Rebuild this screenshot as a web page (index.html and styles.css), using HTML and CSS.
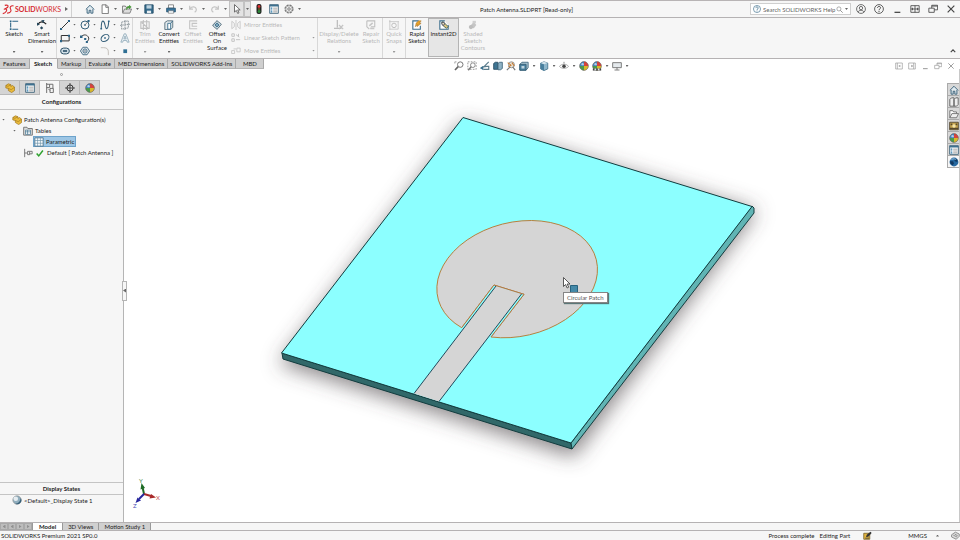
FILE: index.html
```html
<!DOCTYPE html>
<html lang="en">
<head>
    <meta charset="UTF-8">
    <meta name="viewport" content="width=device-width, initial-scale=1.0">
    <title>Patch Antenna.SLDPRT [Read-only]</title>
    <link rel="stylesheet" href="styles.css">
</head>
<body>
    <!-- Icon set, all on a 12x12 grid -->
    <svg class="icon-set" aria-hidden="true">
        <symbol id="home" viewBox="0 0 12 12"><path d="M1 6.500 6 1.500l5 5M2.500 6v5h2.500V7.500h2V11h2.500V6" fill="#dfeaf0" stroke="#28536d"/></symbol>
        <symbol id="new" viewBox="0 0 12 12"><path d="M2.500 1h5l2.500 2.500V11.500H2.500zM7 1v3h3" fill="#fff" stroke="#666"/></symbol>
        <symbol id="open" viewBox="0 0 12 12"><path d="M.5 10.500v-8h3.500l1 1.500h4v2" fill="#eee" stroke="#666"/><path d="M.8 11 3 6h8.500L9.500 11z" fill="#ddd" stroke="#777"/><path d="M5 7c0-3 1-4.500 3.500-4.500V1l3 2.500-3 2.500V4.500C7 4.500 6.500 5.500 6 7z" fill="#4a9a3c"/></symbol>
        <symbol id="save" viewBox="0 0 12 12"><path d="M1 1h10v10H1z" fill="#356a8b" stroke="#204a65"/><path d="M3 1.500h6v4H3z" fill="#bcd2df"/><path d="M3.500 8h5v3h-5z" fill="#e8eef2"/></symbol>
        <symbol id="print" viewBox="0 0 12 12"><path d="M3 1h6v4H3z" fill="#fff" stroke="#777"/><path d="M.8 5h10.400v4.500H.8z" fill="#36749c" stroke="#24506d"/><path d="M3 8h6v3.200H3z" fill="#eef3f6" stroke="#666" stroke-width=".6"/></symbol>
        <symbol id="undo" viewBox="0 0 12 12"><path d="M2 2v4h4M2.500 5.500C5 2.500 9.500 3 10 6.500c.2 1.500-.5 2.500-2 3.500" fill="none" stroke="#c5c5c5" stroke-width="1.500"/></symbol>
        <symbol id="redo" viewBox="0 0 12 12"><path d="M10 2v4H6M9.500 5.500C7 2.500 2.500 3 2 6.500c-.2 1.500.5 2.500 2 3.500" fill="none" stroke="#c5c5c5" stroke-width="1.500"/></symbol>
        <symbol id="pointer" viewBox="0 0 12 12"><path d="M3 .7v9l2.200-2 1.600 3.600 1.600-.7-1.600-3.500h3z" fill="#fff" stroke="#444" stroke-width=".9"/></symbol>
        <symbol id="traffic" viewBox="0 0 12 12"><rect x="3" y="0" width="6" height="12" rx="2.500" fill="#222"/><circle cx="6" cy="3" r="1.700" fill="#d33"/><circle cx="6" cy="6" r="1.300" fill="#6b5a22"/><circle cx="6" cy="9" r="1.700" fill="#2e8a3a"/></symbol>
        <symbol id="list" viewBox="0 0 12 12"><path d="M.8.800h10.400v10.400H.8z" fill="#fff" stroke="#2f5870"/><path d="M.8 1h10.400v2H.8z" fill="#3d708f"/><path d="M2 5h2M2 7.200h2M2 9.400h2" stroke="#2b78a8" stroke-width="1.400"/><path d="M5 5h5M5 7.200h5M5 9.400h5" stroke="#777" stroke-width=".8"/></symbol>
        <symbol id="gear" viewBox="0 0 12 12"><circle cx="6" cy="6" r="4.700" fill="none" stroke="#777" stroke-width="1.500" stroke-dasharray="2.600 1.100"/><circle cx="6" cy="6" r="3.900" fill="#eee" stroke="#777" stroke-width=".7"/><circle cx="6" cy="6" r="1.500" fill="#fff" stroke="#666"/></symbol>
        <symbol id="help" viewBox="0 0 12 12"><circle cx="6" cy="6" r="5.300" fill="none" stroke="currentColor"/><path d="M4.200 4.600c.1-2.300 3.700-2.200 3.600 0C7.800 6 6 5.900 6 7.400M6 8.300v1.200" fill="none" stroke="currentColor" stroke-width="1.200"/></symbol>
        <symbol id="user" viewBox="0 0 12 12"><circle cx="6" cy="6" r="5.300" fill="none" stroke="#555"/><circle cx="6" cy="4.900" r="2" fill="none" stroke="#555"/><path d="M2.500 9.800c1-3 6-3 7 0" fill="none" stroke="#555"/></symbol>
        <symbol id="search" viewBox="0 0 12 12"><circle cx="5" cy="5" r="3.500" fill="#fff" stroke="#777"/><path d="m7.500 7.500 4 4" stroke="#777" stroke-width="1.300"/></symbol>
        <symbol id="minimize" viewBox="0 0 12 12"><path d="M3 10h7" stroke="currentColor" stroke-width="1.500"/></symbol>
        <symbol id="span" viewBox="0 0 12 12"><path d="M1 2h10v8H1zM6 2v8M1 6h10M3 4.500v3M9 4.500v3" fill="none" stroke="currentColor"/></symbol>
        <symbol id="restore" viewBox="0 0 12 12"><path d="M1 5h6.500v5H1zM4.500 5V1.500H11.500V7H7.500M4.500 2.500h7" fill="none" stroke="currentColor"/></symbol>
        <symbol id="close" viewBox="0 0 12 12"><path d="m2 2 8 8m0-8-8 8" stroke="currentColor" stroke-width="1.400"/></symbol>
        <symbol id="pane-left" viewBox="0 0 12 12"><path d="M1 1.500h10v9H1zM3.500 1.500v9" fill="none" stroke="currentColor"/><path d="M8 4v4L5 6z" fill="currentColor"/></symbol>
        <symbol id="pane-right" viewBox="0 0 12 12"><path d="M1 1.500h10v9H1zM8.500 1.500v9" fill="none" stroke="currentColor"/><path d="M5 4v4l3-2z" fill="currentColor"/></symbol>

        <symbol id="sketch" viewBox="0 0 12 12"><path d="M11 1.500H4M2 3v6M4 11h7" fill="none" stroke="#2d6486" stroke-width="1.300"/><path d="M1 .5h2v2H1zM1 10h2v2H1z" fill="#2d6486"/></symbol>
        <symbol id="smart-dim" viewBox="0 0 12 12"><path d="M1 5.500C3.500 1 8 1.500 11 5" fill="none" stroke="#222" stroke-width="1.500"/><path d="M0 3v4l3.500-1.500zM5 .3 9 0 7.500 4zM3.500 9.500l2-2 2 2-2 2z" fill="#27485c"/></symbol>
        <symbol id="line" viewBox="0 0 12 12"><path d="M1.500 10.500 10.500 1.500" stroke="#333" stroke-width="1.200"/><path d="M0 9.500h2.500V12H0zM9.500 0H12v2.500H9.500z" fill="#2d6486"/></symbol>
        <symbol id="rect" viewBox="0 0 12 12"><path d="M1.500 3h9.500v6.500H1.500z" fill="none" stroke="#333" stroke-width="1.200"/><path d="M0 8.500h2.500V11H0zM9.500 2H12v2.500H9.500z" fill="#2d6486"/></symbol>
        <symbol id="slot" viewBox="0 0 12 12"><rect x=".8" y="2.500" width="10.400" height="7" rx="3.500" fill="#d4e1e9" stroke="#2d5168" stroke-width="1.200"/><path d="M3.500 6h5" stroke="#2d5168" stroke-width="2"/></symbol>
        <symbol id="circle" viewBox="0 0 12 12"><circle cx="6" cy="6" r="4.800" fill="none" stroke="#36607a" stroke-width="1.200"/><path d="M5 5h2v2H5zM9 0h2.500v2.500H9z" fill="#2d6486"/><path d="m6 6 3.500-4" stroke="#777"/></symbol>
        <symbol id="arc" viewBox="0 0 12 12"><path d="M1 5C4 1 9 1.500 10.500 6c.2 2-.8 3.500-2.500 4.500" fill="none" stroke="#444" stroke-width="1.200"/><path d="M0 3h3v3H0zM5 6h2.500v2.500H5zM7 9.500h2.500V12H7z" fill="#2d6486"/></symbol>
        <symbol id="polygon" viewBox="0 0 12 12"><path d="M3.500 1.500h5L11.500 6l-3 4.500h-5L.5 6z" fill="#e0e8ed" stroke="#36607a"/><circle cx="6" cy="6" r="2.500" fill="none" stroke="#36607a"/><path d="M5.300 5.300h1.400v1.400H5.300z" fill="#234"/></symbol>
        <symbol id="spline" viewBox="0 0 12 12"><path d="M1.500 10.500C1.500-3 5 1 6 6s3.500 8 4.500-4.500" fill="none" stroke="#36607a" stroke-width="1.300"/><path d="M.5 9.500h2v2h-2zM9.500.5h2v2h-2z" fill="#2d6486"/></symbol>
        <symbol id="ellipse" viewBox="0 0 12 12"><ellipse cx="6" cy="6" rx="5.200" ry="3.700" transform="rotate(-35 6 6)" fill="none" stroke="#36607a" stroke-width="1.200"/><path d="M5 5h2v2H5z" fill="#2d6486"/></symbol>
        <symbol id="fillet" viewBox="0 0 12 12"><path d="M1 2h3.500c4 0 5.500 2 5.500 5v4" fill="none" stroke="#c4c0bb" stroke-width="1.200"/></symbol>
        <symbol id="plane" viewBox="0 0 12 12"><path d="M2 2.500 10 1v8.500L2 11zM6 0v12M0 6.500 12 5" fill="none" stroke="#808a90" stroke-dasharray="2 .7"/></symbol>
        <symbol id="text" viewBox="0 0 12 12"><path d="M1 11 5 1h2l4 10H8.500L8 9H4l-.6 2zM4.700 7h2.600L6 3.500z" fill="#e8eff3" stroke="#7f9dae" stroke-width=".8"/></symbol>
        <symbol id="point" viewBox="0 0 12 12"><path d="M4 4h4.500v4.500H4z" fill="#2f6f94"/></symbol>
        <symbol id="trim" viewBox="0 0 12 12"><path d="M1 2h10v8H1zM4 0v12M8 0v12M2 3l8 7" fill="none" stroke="#c0c0c0" stroke-width="1.300"/></symbol>
        <symbol id="convert" viewBox="0 0 12 12"><path d="m1 3 3-2h6.500v8L8 11.500H1z" fill="#e2e8eb" stroke="#486471"/><path d="M4.500 4H8v7H4.500zM8 4l2.500-3" fill="#fff" stroke="#2d6486"/></symbol>
        <symbol id="offset" viewBox="0 0 12 12"><path d="M11 1H2v9.500h9M11 4H5v3.500h6" fill="none" stroke="#c4c4c4" stroke-width="1.300"/></symbol>
        <symbol id="surface" viewBox="0 0 12 12"><path d="M.8 6C3 5 4 2 6 .8 8 3 10 3 11.200 5.500 9 7 8 10 6 11.200 4 9 2 9 .8 6z" fill="#cddbe2" stroke="#415e6e"/><path d="M3.500 6 6 3.500 8.500 6 6 8.500z" fill="#7da4b8" stroke="#2d6486"/></symbol>
        <symbol id="mirror" viewBox="0 0 12 12"><path d="M6 0v12M1 1.500 4 4v4l-3 2.500zM11 1.500 8 4v4l3 2.500z" fill="none" stroke="#c4c4c4"/></symbol>
        <symbol id="pattern" viewBox="0 0 12 12"><path d="M1 1h3v3H1zM1 7h3v3H1zM6 2l4 3M6 8h5M9 1v3" fill="none" stroke="#c4c4c4" stroke-width="1.200"/></symbol>
        <symbol id="move" viewBox="0 0 12 12"><path d="M.8 5.500h3.500V9H.8zM7 2.500h4V7H7zM3 3.500h3" fill="none" stroke="#c4c4c4"/></symbol>
        <symbol id="relations" viewBox="0 0 12 12"><path d="M4 0v9M0 10h9" stroke="#bdbdbd" stroke-width="1.500"/><path d="m6 6 5 5m0-5-5 5" stroke="#c4c4c4" stroke-width="1.500"/></symbol>
        <symbol id="repair" viewBox="0 0 12 12"><path d="M1 1h9.500v7H6M1 1v7l3 3" fill="none" stroke="#c0c0c0" stroke-width="1.300"/><path d="M4 7 8 3.500M5 10h5" stroke="#c8c8c8" stroke-width="2"/></symbol>
        <symbol id="snaps" viewBox="0 0 12 12"><path d="M1 0v12M0 2h12M11 2v9H1" fill="none" stroke="#c4c4c4"/><circle cx="6" cy="6.500" r="2.700" fill="none" stroke="#c0c0c0" stroke-width="1.200"/></symbol>
        <symbol id="rapid" viewBox="0 0 12 12"><path d="M8 1H1v10h9V7" fill="#fff" stroke="#3b6e8c" stroke-width="1.300"/><path d="m4 8 1-4.500L8 1h3L9 4h2L6 8l1-2.500z" fill="#e7a32b" stroke="#925d17" stroke-width=".5"/></symbol>
        <symbol id="instant" viewBox="0 0 12 12"><path d="M7 1H1v10h10V6" fill="#fff" stroke="#3b6e8c" stroke-width="1.300"/><path d="m3 3 2-1 6 6-2 2-4-3z" fill="#d9c47c" stroke="#3b5848"/><circle cx="5" cy="4.500" r="1.700" fill="#e7e1b4" stroke="#446"/></symbol>
        <symbol id="shaded" viewBox="0 0 12 12"><path d="M1 9 7 2l3 4-3 4z" fill="#c5c5c5"/><circle cx="3.500" cy="8.500" r="2.500" fill="#bdbdbd"/><path d="M5.500 1h4v3h-4z" fill="#cfcfcf"/></symbol>

        <symbol id="zoom-fit" viewBox="0 0 12 12"><circle cx="7.500" cy="4.300" r="3.300" fill="#fff" stroke="#777" stroke-width="1.200"/><path d="M5 6.800 1.200 10.800" stroke="#666" stroke-width="2"/><path d="M1 1v2M1 1h2" stroke="#999" fill="none"/></symbol>
        <symbol id="zoom-area" viewBox="0 0 12 12"><path d="M1 1h10v9H1z" fill="none" stroke="#888" stroke-dasharray="2 1.500"/><circle cx="7" cy="5" r="2.800" fill="#fff" stroke="#777"/><path d="m5 7-3.500 4" stroke="#777" stroke-width="1.700"/></symbol>
        <symbol id="prev-view" viewBox="0 0 12 12"><path d="M10.500 1 4.500 7M1 9c2-3 5-2.500 9.500-2.500v3.500H4" fill="none" stroke="#5b7c8c" stroke-width="1.400"/><path d="M0 8.500 4 6v5z" fill="#3c728f"/></symbol>
        <symbol id="section" viewBox="0 0 12 12"><path d="m.8 3 2-1.500h3V10H.8z" fill="#3d7593" stroke="#274b60"/><path d="M6 3 8 1.500h3.200V9L9 10.500H6z" fill="#8eb2c5" stroke="#3c6379"/></symbol>
        <symbol id="views" viewBox="0 0 12 12"><circle cx="6.500" cy="4.500" r="3.600" fill="#e7e4da" stroke="#888"/><path d="m1 11 4-4M8 7l3 4" stroke="#777" stroke-width="1.400"/><path d="m2 2 4 3-3 2M7 2l3 4" fill="none" stroke="#c87b32" stroke-width="1.300"/></symbol>
        <symbol id="orient" viewBox="0 0 12 12"><path d="m1 4 2.500-2.500H11V8l-2.500 3H1z" fill="#a7c3d1" stroke="#3c6379"/><path d="M1 4h7.500v7H1z" fill="#4c83a2" stroke="#2f5870"/><path d="M3 6h3.500v3H3z" fill="#bfd3de"/></symbol>
        <symbol id="cube" viewBox="0 0 12 12"><path d="M2 2.500 6 1l4.500 1.500v7L6 11.500 2 9.500z" fill="#8fb7cc" stroke="#41718b"/><path d="M2 2.500 6 4v7.500L2 9.500z" fill="#487f9e"/><path d="m2 2.500 4 1.300 4.500-1.300L6 1z" fill="#d4e4ec"/></symbol>
        <symbol id="eye" viewBox="0 0 12 12"><path d="M.5 6.500C3 3 9 3 11.500 6.500 9 9.500 3 9.500.5 6.500z" fill="#fff" stroke="#999"/><circle cx="6" cy="6.300" r="2.100" fill="#444"/><path d="M6 1v2" stroke="#777"/></symbol>
        <symbol id="ball" viewBox="0 0 12 12"><path d="M6 6V.7A5.300 5.300 0 0 0 .7 6z" fill="#4386c4"/><path d="M6 6h5.300A5.300 5.300 0 0 0 6 .7z" fill="#d7433c"/><path d="M6 6v5.300A5.300 5.300 0 0 0 11.300 6z" fill="#d7b82b"/><path d="M6 6H.7A5.300 5.300 0 0 0 6 11.300z" fill="#4b9a4c"/><circle cx="6" cy="6" r="5.300" fill="none" stroke="#665d58" stroke-width=".7"/><circle cx="4.300" cy="3.800" r="1.400" fill="#fff" fill-opacity=".6"/></symbol>
        <symbol id="scene" viewBox="0 0 12 12"><use href="#ball" width="12" height="12"/><path d="M1 9h10v2.500H1z" fill="#444"/><path d="M3 9h2v2.500H3zM7 9h2v2.500H7z" fill="#ddd"/></symbol>
        <symbol id="monitor" viewBox="0 0 12 12"><path d="M.8 2h10.400v6H.8z" fill="#e5eaed" stroke="#666"/><path d="M6 8v2.500M3 10.800h6" stroke="#666"/></symbol>

        <symbol id="part" viewBox="0 0 12 12"><path d="m1 3 3-2 3 1v2l2-1 2.500 2v4L8 11.500 4 9V6.500L1 6z" fill="#eabb3c" stroke="#9b7014" stroke-width=".8"/><path d="m1 3 2.500 1L7 2M4 6.500 7.500 8l4-3" fill="none" stroke="#9b7014" stroke-width=".7"/></symbol>
        <symbol id="config" viewBox="0 0 12 12"><path d="M2 0v12M2 1.500h3.500v4H2M5.500 1.500h4v5M6 6.500h4v5H6zM4 7l2 2" fill="none" stroke="#666" stroke-width="1.100"/></symbol>
        <symbol id="config-row" viewBox="0 0 12 12"><path d="M2 1v10M2 6h3M5.500 4h2.500v4H5.500zM8 4h3v3H8" fill="none" stroke="#666"/></symbol>
        <symbol id="target" viewBox="0 0 12 12"><circle cx="6" cy="6" r="3.700" fill="#ddd" stroke="#333" stroke-width="1.200"/><path d="M6 0v12M0 6h12" stroke="#333"/></symbol>
        <symbol id="tables" viewBox="0 0 12 12"><path d="M.8 1.500h4l1 1.500h5.400v8H.8z" fill="#dedede" stroke="#666"/><path d="M3 5h6v5H3zM3 7h6M5.500 5v5" fill="#fff" stroke="#3b6e8c" stroke-width=".8"/></symbol>
        <symbol id="grid" viewBox="0 0 12 12"><path d="M1 1h10v10H1z" fill="#f6fafc" stroke="#456f88"/><path d="M1 4.200h10M1 7.500h10M4.300 1v10M7.700 1v10" stroke="#6d93a9" stroke-width=".8"/></symbol>
        <symbol id="check" viewBox="0 0 12 12"><path d="m2 6.500 2.500 3 5-6.500" fill="none" stroke="#2ea22e" stroke-width="1.800"/></symbol>
        <symbol id="display" viewBox="0 0 12 12"><circle cx="6" cy="6" r="5" fill="#8fadbd" stroke="#888" stroke-width=".7"/><circle cx="4.500" cy="4.500" r="2.800" fill="#e6edf1"/><path d="M10.500 3.500A5 5 0 0 1 4 10.600C8 10 10 7.500 10.500 3.500z" fill="#355f78"/></symbol>

        <symbol id="library" viewBox="0 0 12 12"><path d="m1 3 2-2h3v10H1zM6 3l2-2h3v8l-2 2H6z" fill="#eee" stroke="#555"/></symbol>
        <symbol id="folder" viewBox="0 0 12 12"><path d="M1 10.500V2h3.500l1 1.500H9v2" fill="#fff" stroke="#666"/><path d="m1 10.500 2.500-5h8l-2.500 5z" fill="#eee" stroke="#666"/></symbol>
        <symbol id="palette" viewBox="0 0 12 12"><path d="M.8 1.500h10.400v9H.8z" fill="#c6a650" stroke="#493f2b"/><path d="M1 8h10v2H1zM2 3h2v2H2zM8 3h2v2H8z" fill="#57492c"/><circle cx="6" cy="6" r="2" fill="#f5e6aa"/></symbol>
        <symbol id="globe" viewBox="0 0 12 12"><circle cx="6" cy="6" r="5.300" fill="#2568a0"/><path d="M1 5h4l1 3-2 2-2-2zM6 2l4 1v3L7 5z" fill="#123a62"/><path d="M3 3c2-1 3-1 5 0" stroke="#b8dcf2" fill="none"/></symbol>
        <symbol id="edit" viewBox="0 0 12 12"><path d="M1 3h8v8H1z" fill="#e4b740" stroke="#6b5821"/><path d="m4 8 1-3 5-4 1.500 1.500L7 7.500z" fill="#333"/><path d="M3 9.500h5" stroke="#333"/></symbol>
        <symbol id="tags" viewBox="0 0 12 12"><path d="m.8 5 5-3.500L11 4v3l-4 4L.8 8z" fill="#ddd" stroke="#777"/><path d="M3 5.500 8 8M5 4l4 2.500" stroke="#777"/></symbol>
    </svg>

    <header class="title-bar">
        <div class="brand">
            <svg class="brand-mark" viewBox="0 0 13 12" aria-hidden="true"><path d="M3 1.500C5.500.8 7 1.500 6.500 3 6 4.500 3.500 4.500 2 6M3.500 5.500C7 5.500 4 10 .8 10.500M12.500 2C9.500 1.500 8 3.500 9.300 5.500s0 4.500-3.800 4.500" fill="none" stroke="#d8262c" stroke-width="1.200"/></svg>
            <span class="brand-name"><b>SOLID</b>WORKS</span>
            <i class="caret caret-right"></i>
        </div>
        <nav class="quick-access" aria-label="Quick access">
            <button class="tool" aria-label="Home"><svg><use href="#home"/></svg></button>
            <button class="tool" aria-label="New"><svg><use href="#new"/></svg></button><button class="drop" aria-label="New options"><i class="caret"></i></button>
            <button class="tool" aria-label="Open"><svg><use href="#open"/></svg></button><button class="drop" aria-label="Open options"><i class="caret"></i></button>
            <button class="tool" aria-label="Save"><svg><use href="#save"/></svg></button><button class="drop" aria-label="Save options"><i class="caret"></i></button>
            <button class="tool" aria-label="Print"><svg><use href="#print"/></svg></button><button class="drop" aria-label="Print options"><i class="caret"></i></button>
            <button class="tool" aria-label="Undo"><svg><use href="#undo"/></svg></button><button class="drop" aria-label="Undo options"><i class="caret"></i></button>
            <button class="tool" aria-label="Redo"><svg><use href="#redo"/></svg></button><button class="drop" aria-label="Redo options"><i class="caret"></i></button>
            <button class="tool pressed" aria-label="Select"><svg><use href="#pointer"/></svg></button><button class="drop pressed" aria-label="Select options"><i class="caret"></i></button>
            <button class="tool" aria-label="Rebuild"><svg><use href="#traffic"/></svg></button>
            <button class="tool" aria-label="File properties"><svg><use href="#list"/></svg></button>
            <button class="tool" aria-label="Options"><svg><use href="#gear"/></svg></button><button class="drop" aria-label="More options"><i class="caret"></i></button>
        </nav>
        <h1 class="doc-title">Patch Antenna.SLDPRT [Read-only]</h1>
        <form class="search-box">
            <svg class="search-help"><use href="#help"/></svg>
            <input type="text" class="search-input" placeholder="Search SOLIDWORKS Help" aria-label="Search SOLIDWORKS Help">
            <button type="button" class="search-btn" aria-label="Search"><svg><use href="#search"/></svg></button>
            <button type="button" class="drop" aria-label="Search options"><i class="caret"></i></button>
        </form>
        <div class="window-controls">
            <button aria-label="Login"><svg><use href="#user"/></svg></button>
            <button aria-label="Help"><svg><use href="#help"/></svg></button>
            <button aria-label="Minimize"><svg><use href="#minimize"/></svg></button>
            <button aria-label="Span displays"><svg><use href="#span"/></svg></button>
            <button aria-label="Restore"><svg><use href="#restore"/></svg></button>
            <button aria-label="Close"><svg><use href="#close"/></svg></button>
        </div>
    </header>

    <section class="ribbon" aria-label="Sketch commands">
        <div class="group">
            <button class="command"><svg><use href="#sketch"/></svg><span>Sketch</span><i class="caret"></i></button>
            <button class="command"><svg><use href="#smart-dim"/></svg><span>Smart Dimension</span><i class="caret"></i></button>
        </div>
        <div class="group entities">
            <button aria-label="Line"><svg><use href="#line"/></svg><i class="caret"></i></button>
            <button aria-label="Circle"><svg><use href="#circle"/></svg><i class="caret"></i></button>
            <button aria-label="Spline"><svg><use href="#spline"/></svg><i class="caret"></i></button>
            <button aria-label="Plane"><svg><use href="#plane"/></svg></button>
            <button aria-label="Rectangle"><svg><use href="#rect"/></svg><i class="caret"></i></button>
            <button aria-label="Arc"><svg><use href="#arc"/></svg><i class="caret"></i></button>
            <button aria-label="Ellipse"><svg><use href="#ellipse"/></svg><i class="caret"></i></button>
            <button aria-label="Text"><svg><use href="#text"/></svg></button>
            <button aria-label="Slot"><svg><use href="#slot"/></svg><i class="caret"></i></button>
            <button aria-label="Polygon"><svg><use href="#polygon"/></svg></button>
            <button aria-label="Fillet"><svg><use href="#fillet"/></svg><i class="caret"></i></button>
            <button aria-label="Point"><svg><use href="#point"/></svg></button>
        </div>
        <div class="group">
            <button class="command narrow" disabled><svg><use href="#trim"/></svg><span>Trim Entities</span><i class="caret"></i></button>
            <button class="command narrow"><svg><use href="#convert"/></svg><span>Convert Entities</span><i class="caret"></i></button>
            <button class="command narrow" disabled><svg><use href="#offset"/></svg><span>Offset Entities</span></button>
            <button class="command narrow"><svg><use href="#surface"/></svg><span>Offset<br>On<br>Surface</span></button>
            <div class="stack">
                <button disabled><svg><use href="#mirror"/></svg><span>Mirror Entities</span></button>
                <button disabled><svg><use href="#pattern"/></svg><span>Linear Sketch Pattern</span><i class="caret"></i></button>
                <button disabled><svg><use href="#move"/></svg><span>Move Entities</span><i class="caret"></i></button>
            </div>
        </div>
        <div class="group">
            <button class="command wide" disabled><svg><use href="#relations"/></svg><span>Display/Delete Relations</span><i class="caret"></i></button>
            <button class="command small" disabled><svg><use href="#repair"/></svg><span>Repair Sketch</span></button>
        </div>
        <div class="group">
            <button class="command small" disabled><svg><use href="#snaps"/></svg><span>Quick Snaps</span><i class="caret"></i></button>
        </div>
        <div class="group last">
            <button class="command small"><svg><use href="#rapid"/></svg><span>Rapid Sketch</span></button>
            <button class="command pressed"><svg><use href="#instant"/></svg><span>Instant2D</span></button>
            <button class="command" disabled><svg><use href="#shaded"/></svg><span>Shaded Sketch Contours</span></button>
        </div>
        <button class="collapse" aria-label="Collapse ribbon"><svg viewBox="0 0 8 5"><path d="m1 4 3-3 3 3" fill="none" stroke="#444" stroke-width="1.500"/></svg></button>
    </section>

    <nav class="ribbon-tabs" aria-label="Ribbon tabs">
        <button>Features</button>
        <button class="active">Sketch</button>
        <button>Markup</button>
        <button>Evaluate</button>
        <button>MBD Dimensions</button>
        <button>SOLIDWORKS Add-Ins</button>
        <button>MBD</button>
    </nav>

    <main class="workspace">
        <aside class="manager">
            <div class="grip"></div>
            <div class="manager-tabs">
                <button aria-label="FeatureManager"><svg><use href="#part"/></svg></button>
                <button aria-label="PropertyManager"><svg><use href="#list"/></svg></button>
                <button class="active" aria-label="ConfigurationManager"><svg><use href="#config"/></svg></button>
                <button aria-label="DimXpertManager"><svg><use href="#target"/></svg></button>
                <button aria-label="DisplayManager"><svg><use href="#ball"/></svg></button>
            </div>
            <h2 class="manager-title">Configurations</h2>
            <ul class="tree">
                <li>
                    <div class="node"><i class="caret"></i><svg><use href="#part"/></svg><span>Patch Antenna Configuration(s)</span></div>
                    <ul>
                        <li>
                            <div class="node"><i class="caret"></i><svg><use href="#tables"/></svg><span>Tables</span></div>
                            <ul>
                                <li><div class="node leaf selected"><svg><use href="#grid"/></svg><span>Parametric</span></div></li>
                            </ul>
                        </li>
                        <li><div class="node leaf"><svg><use href="#config-row"/></svg><svg><use href="#check"/></svg><span>Default [ Patch Antenna ]</span></div></li>
                    </ul>
                </li>
            </ul>
            <div class="display-states">
                <h2>Display States</h2>
                <div class="state"><svg><use href="#display"/></svg><span>&lt;Default&gt;_Display State 1</span></div>
            </div>
            <button class="splitter" aria-label="Hide panel"><i class="caret caret-left"></i></button>
        </aside>

        <section class="viewport">
            <svg class="model" viewBox="124 69 835 453" role="img" aria-label="Patch antenna model">
                <defs>
                    <filter id="soft" x="-20%" y="-20%" width="140%" height="140%"><feGaussianBlur stdDeviation="10"/></filter>
                </defs>
                <path class="shadow" d="M463 122 757 211 574 457 279 364z" filter="url(#soft)"/>
                <g class="board">
                    <path class="front" d="M282 353 571 443 572 449 283 359z"/>
                    <path class="side" d="M752 206 754 208V213L572 449 571 443z"/>
                    <path class="top" d="M463 117.500 752 206.500 571 443 281.500 353z"/>
                </g>
                <path class="patch" d="M461.700 327.700A81.500 57 -13.700 1 1 491 337L524 294.300 494 285z"/>
                <path class="gap" d="M461.700 327.700 494 285 524 294.300 491 337z"/>
                <path class="feed" d="M414 393.500 496 286 521.500 294 439 401.500z"/>
                <path class="notch" d="M461.700 327.700 494 285 524 294.300 491 337"/>
                <path class="feed-edge" d="M414 393.500 496 286M521.500 294 439 401.500"/>
                <!-- Axis triad -->
                <g class="triad">
                    <path d="M144 494 142.500 487" stroke="#1e6b26"/><path d="m141.500 483 3.500 5-4.500 1.500z" fill="#1e6b26"/>
                    <path d="m144 494 7 2" stroke="#a92a2a"/><path d="m156 497.500-6.500 1 1.500-4.500z" fill="#a92a2a"/>
                    <path d="m144 494-5 5" stroke="#26269c"/><path d="m135.500 503 2-5.500 3.500 3z" fill="#26269c"/>
                    <text x="139" y="483" fill="#3d8342">Y</text>
                    <text x="156" y="500" fill="#c45656">X</text>
                    <text x="133" y="508" fill="#4a4ab4">Z</text>
                </g>
                <!-- Cursor and face badge -->
                <path d="M563.500 277.500v9l2-2 1.700 3.500 1.500-.8-1.600-3.200h2.900z" fill="#fff" stroke="#333" stroke-width=".8"/>
                <path d="M570.500 285.500h7v7h-7z" fill="#4489a8" stroke="#27627e"/>
            </svg>
            <div class="tooltip" role="tooltip">Circular Patch</div>

            <div class="view-tools">
                <button aria-label="Zoom to fit"><svg><use href="#zoom-fit"/></svg></button>
                <button aria-label="Zoom to area"><svg><use href="#zoom-area"/></svg></button>
                <button aria-label="Previous view"><svg><use href="#prev-view"/></svg></button>
                <button aria-label="Section view"><svg><use href="#section"/></svg></button>
                <button aria-label="Dynamic annotation views"><svg><use href="#views"/></svg></button>
                <button aria-label="View orientation"><svg><use href="#orient"/></svg><i class="caret"></i></button>
                <button aria-label="Display style"><svg><use href="#cube"/></svg><i class="caret"></i></button>
                <button aria-label="Hide/show items"><svg><use href="#eye"/></svg><i class="caret"></i></button>
                <button aria-label="Edit appearance"><svg><use href="#ball"/></svg></button>
                <button aria-label="Apply scene"><svg><use href="#scene"/></svg><i class="caret"></i></button>
                <button aria-label="View settings"><svg><use href="#monitor"/></svg><i class="caret"></i></button>
            </div>
            <div class="doc-controls">
                <button aria-label="Expand left"><svg><use href="#pane-left"/></svg></button>
                <button aria-label="Expand right"><svg><use href="#pane-right"/></svg></button>
                <button aria-label="Minimize document"><svg><use href="#minimize"/></svg></button>
                <button aria-label="Restore document"><svg><use href="#restore"/></svg></button>
                <button aria-label="Close document"><svg><use href="#close"/></svg></button>
            </div>
            <div class="task-pane">
                <button aria-label="Resources"><svg><use href="#home"/></svg></button>
                <button aria-label="Design library"><svg><use href="#library"/></svg></button>
                <button aria-label="File explorer"><svg><use href="#folder"/></svg></button>
                <button aria-label="View palette"><svg><use href="#palette"/></svg></button>
                <button aria-label="Appearances"><svg><use href="#ball"/></svg></button>
                <button aria-label="Custom properties"><svg><use href="#list"/></svg></button>
                <button class="active" aria-label="Forum"><svg><use href="#globe"/></svg></button>
            </div>
        </section>
    </main>

    <nav class="model-tabs" aria-label="Model tabs">
        <div class="scroll-btns">
            <button aria-label="First"><i class="caret caret-left"></i></button>
            <button aria-label="Previous"><i class="caret caret-left"></i></button>
            <button aria-label="Next"><i class="caret caret-right"></i></button>
            <button aria-label="Last"><i class="caret caret-right"></i></button>
        </div>
        <button class="tab active">Model</button>
        <button class="tab">3D Views</button>
        <button class="tab">Motion Study 1</button>
    </nav>

    <footer class="status-bar">
        <span class="product">SOLIDWORKS Premium 2021 SP0.0</span>
        <span class="state-text">Process complete</span>
        <span>Editing Part</span>
        <svg class="edit-icon"><use href="#edit"/></svg>
        <button class="units">MMGS <i class="caret caret-up"></i></button>
        <svg><use href="#tags"/></svg>
    </footer>
</body>
</html>
```
FILE: styles.css
```css
* {
    box-sizing: border-box;
}
body {
    display: flex;
    flex-direction: column;
    height: 100vh;
    margin: 0;
    overflow: hidden;
    background: #fff;
    color: #222;
    font-family: Lato, "Liberation Sans", sans-serif;
    font-size: 6px;
    line-height: 7px;
}
button, input {
    margin: 0;
    padding: 0;
    border: none;
    border-radius: 0;
    background: none;
    color: inherit;
    font: inherit;
}
button {
    display: flex;
    align-items: center;
    justify-content: center;
}
button:disabled {
    color: #b9b9b9;
}
svg {
    flex: none;
    width: 10px;
    height: 10px;
}
h1, h2 {
    margin: 0;
    font-size: 6px;
}
ul {
    margin: 0;
    padding: 0;
    list-style: none;
}
.icon-set {
    position: absolute;
    width: 0;
    height: 0;
}

/* small arrows */
.caret {
    flex: none;
    width: 3px;
    height: 2px;
    background: #666;
    clip-path: polygon(0 0, 100% 0, 50% 100%);
}
.caret-right {
    width: 3px;
    height: 4px;
    clip-path: polygon(0 0, 100% 50%, 0 100%);
}
.caret-left {
    width: 3px;
    height: 4px;
    clip-path: polygon(100% 0, 0 50%, 100% 100%);
}
.caret-up {
    clip-path: polygon(0 100%, 50% 0, 100% 100%);
}
button:disabled .caret {
    background: #999;
}

/* title bar */
.title-bar {
    display: flex;
    flex: none;
    align-items: stretch;
    height: 18px;
    border-top: 1px solid #b8b4b5;
    border-bottom: 1px solid #b5b2b3;
    background: #f6f6f6;
}
.brand {
    display: flex;
    align-items: center;
    width: 72px;
    padding: 0 3px 0 2px;
    border-right: 1px solid #d0d0d0;
}
.brand-mark {
    width: 12px;
    height: 11px;
}
.brand-name {
    flex: 1;
    padding-left: 1px;
    color: #d5282e;
    font-size: 7px;
}
.quick-access {
    display: flex;
    padding-left: 10px;
}
.tool {
    width: 15px;
}
.drop {
    width: 7px;
}
.title-bar .pressed {
    border: 1px solid #c2c2c2;
    background: #e3e3e3;
}
.doc-title {
    flex: 1;
    align-self: center;
    font-weight: normal;
    text-align: center;
}
.search-box {
    display: flex;
    align-items: center;
    align-self: center;
    width: 101px;
    height: 12px;
    margin-right: 1px;
    padding-left: 2px;
    border: 1px solid #cfcfcf;
    background: #fff;
}
.search-help {
    width: 8px;
    height: 8px;
    color: #3f6f8c;
}
.search-input {
    flex: 1;
    min-width: 0;
    padding-left: 2px;
}
.search-input::placeholder {
    color: #666;
}
.search-btn svg {
    width: 7px;
    height: 7px;
}
.window-controls {
    display: flex;
    color: #444;
}
.window-controls button {
    width: 18px;
}

/* ribbon */
.ribbon {
    display: flex;
    flex: none;
    height: 41px;
    border-bottom: 1px solid #b5b2b3;
    background: #f6f6f6;
}
.group {
    display: flex;
    border-right: 1px solid #d8d8d8;
}
.group.last {
    flex: 1;
    border-right: none;
}
.command {
    flex-direction: column;
    justify-content: flex-start;
    width: 28px;
    height: 39px;
    padding-top: 2px;
}
.command.narrow {
    width: 24px;
}
.command.small {
    width: 22px;
}
.command.wide {
    width: 42px;
}
.command .caret {
    margin-top: auto;
    margin-bottom: 4px;
}
.command.pressed {
    width: 31px;
    padding-top: 1px;
    border: 1px solid #b4b4b4;
    background: #e6e6e6;
}
.entities {
    display: grid;
    grid-template-columns: 20px 20px 20px 15px;
    grid-template-rows: 13px 13px 13px;
}
.entities button {
    justify-content: flex-start;
    gap: 3px;
    padding-left: 3px;
}
.stack {
    display: grid;
    grid-template-rows: 13px 13px 13px;
    width: 88px;
}
.stack button {
    justify-content: flex-start;
    gap: 3px;
    padding: 0 2px;
}
.stack span {
    flex: 1;
    text-align: left;
}
.collapse {
    align-self: flex-end;
    width: 14px;
    height: 14px;
}
.collapse svg {
    width: 6px;
    height: 4px;
}

/* command tabs */
.ribbon-tabs {
    display: flex;
    flex: none;
    height: 10px;
}
.ribbon-tabs button {
    min-width: 28px;
    padding: 0 3px;
    border-right: 1px solid #a9a9a9;
    border-bottom: 1px solid #b4b4b4;
    background: #cfcfcf;
}
.ribbon-tabs .active {
    border-bottom-color: #f6f6f6;
    background: #f6f6f6;
    font-weight: bold;
}

/* manager panel */
.workspace {
    display: flex;
    flex: 1;
    min-height: 0;
}
.manager {
    position: relative;
    display: flex;
    flex: none;
    flex-direction: column;
    width: 124px;
    border-right: 1px solid #b5b5b5;
    background: #f6f6f6;
}
.grip {
    align-self: center;
    width: 3px;
    height: 3px;
    margin: 4px 0;
    border: 1px solid #999;
    border-radius: 50%;
}
.manager-tabs {
    display: flex;
    height: 15px;
    border-bottom: 1px solid #bdbdbd;
}
.manager-tabs button {
    width: 20px;
    height: 15px;
    border: 1px solid #b8b8b8;
    border-left: none;
    background: #d4d4d4;
}
.manager-tabs .active {
    border-bottom-color: #f6f6f6;
    background: #f6f6f6;
}
.manager-title {
    padding: 3px 0 4px;
    border-bottom: 1px solid #c4c4c4;
    text-align: center;
}
.tree {
    flex: 1;
    padding-top: 4px;
}
.tree ul {
    padding-left: 11px;
}
.node {
    display: flex;
    align-items: center;
    gap: 2px;
    width: max-content;
    height: 11px;
    padding: 0 2px;
}
.node .caret {
    margin-right: 5px;
}
.node.leaf {
    margin-left: 11px;
    padding-left: 1px;
}
.selected {
    background: #9dc6e5;
    box-shadow: inset 0 0 0 1px #6da3cb;
}
.display-states {
    height: 40px;
    border-top: 1px solid #c4c4c4;
}
.display-states h2 {
    padding: 2px 0;
    border-bottom: 1px solid #c4c4c4;
    text-align: center;
}
.state {
    display: flex;
    align-items: center;
    gap: 2px;
    padding-left: 12px;
}
.splitter {
    position: absolute;
    top: calc(50% - 15px);
    right: -4px;
    width: 5px;
    height: 20px;
    border: 1px solid #b5b5b5;
    background: #f6f6f6;
}

/* graphics area */
.viewport {
    position: relative;
    flex: 1;
    min-width: 0;
    border-right: 1px solid #c8c8c8;
}
.model {
    display: block;
    width: 100%;
    height: 100%;
}
.shadow {
    fill: #504a4c;
    fill-opacity: .65;
}
.board {
    stroke: #123c3e;
    stroke-linejoin: round;
}
.top {
    fill: #8cffff;
}
.front {
    fill: #316869;
}
.side {
    fill: #60b4b4;
}
.patch {
    fill: #d5d5d5;
    stroke: #b5813f;
}
.gap {
    fill: #8cffff;
}
.feed {
    fill: #d5d5d5;
}
.notch {
    fill: none;
    stroke: #b5733f;
}
.feed-edge {
    fill: none;
    stroke: #214a5c;
}
.triad {
    stroke-width: 2;
    font-size: 6px;
}
.tooltip {
    position: absolute;
    top: 223px;
    left: 439px;
    padding: 1px 3px;
    border: 1px solid #858585;
    background: #fff;
    box-shadow: 1px 1px 1px #5b7777;
    color: #555;
}
.view-tools {
    position: absolute;
    top: -9px;
    left: 50%;
    display: flex;
    height: 12px;
    transform: translateX(-50%);
}
.view-tools button {
    padding-left: 1px;
}
.view-tools button svg {
    margin-right: 2px;
}
.view-tools .caret {
    margin: 0 2px;
}
.doc-controls {
    position: absolute;
    top: -9px;
    right: 2px;
    display: flex;
    height: 12px;
    color: #999;
}
.doc-controls button {
    width: 13px;
}
.doc-controls svg {
    width: 8px;
    height: 8px;
}
.task-pane {
    position: absolute;
    top: 14px;
    right: 0;
    border: 1px solid #aaa;
    border-right: none;
    border-bottom: none;
}
.task-pane button {
    width: 11px;
    height: 12px;
    border-bottom: 1px solid #aaa;
    background: #d8d8d8;
}
.task-pane .active {
    background: #f6f6f6;
}

/* bottom tabs */
.model-tabs {
    display: flex;
    flex: none;
    height: 9px;
    border-top: 1px solid #b5b2b3;
    border-bottom: 1px solid #b5b2b3;
    background: #f6f6f6;
}
.scroll-btns {
    display: flex;
    width: 33px;
    border-right: 1px solid #999;
    background: #bdbdbd;
}
.scroll-btns button {
    flex: 1;
    border: 1px solid #a9a9a9;
}
.scroll-btns .caret {
    background: #909090;
}
.tab {
    padding: 0 5px;
    border-right: 1px solid #999;
    background: #d0d0d0;
}
.tab.active {
    padding: 0 6px;
    background: #fff;
    font-weight: bold;
}

/* status bar */
.status-bar {
    display: flex;
    flex: none;
    align-items: center;
    height: 9px;
    background: #f6f6f6;
}
.status-bar svg {
    width: 9px;
    height: 9px;
}
.product {
    flex: 1;
    padding-left: 1px;
}
.state-text {
    margin-right: 5px;
}
.status-bar .edit-icon {
    margin: 0 36px 0 13px;
}
.units {
    gap: 9px;
    margin-right: 12px;
}
```
